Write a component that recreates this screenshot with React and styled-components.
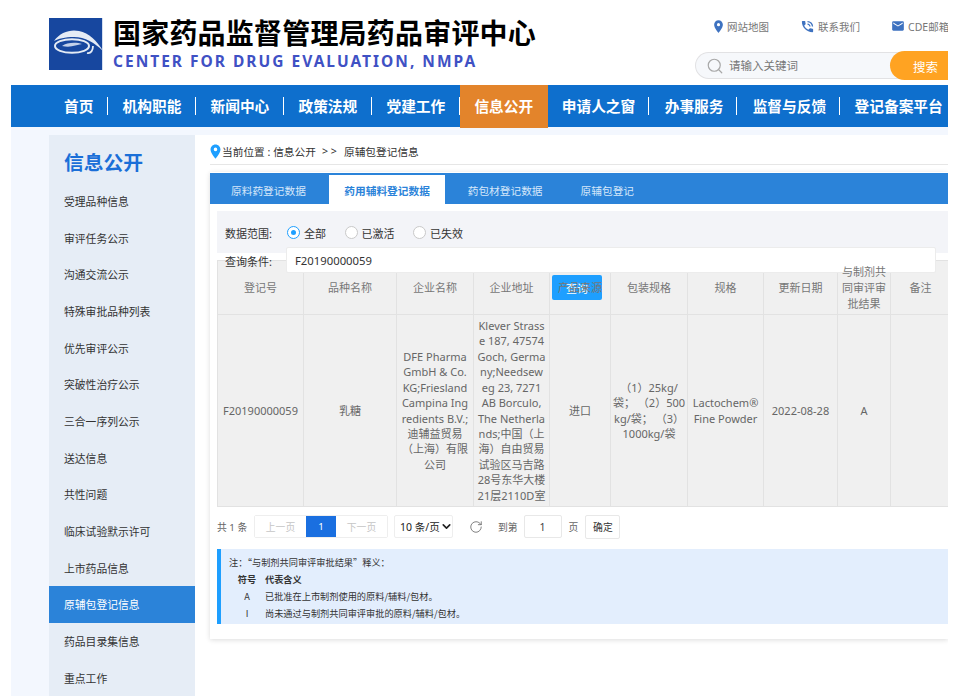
import React from "react";
import styled, { createGlobalStyle } from "styled-components";
import { MdLocationOn, MdPhoneInTalk, MdEmail } from "react-icons/md";
import { Search, RotateCw, ChevronDown } from "lucide-react";

const FONT = `"Noto Sans", "Noto Sans CJK SC", sans-serif`;

const Global = createGlobalStyle`
  html, body { margin: 0; padding: 0; background: #fff; height: 696px; overflow: hidden; }
  body { font-family: ${FONT}; }
  * { box-sizing: border-box; }
`;

const Page = styled.div`
  margin: 0 11px;
  width: 937px;
  height: 696px;
  overflow: hidden;
  display: flex;
  flex-direction: column;
`;

const Header = styled.header`
  height: 85px;
  flex: none;
  display: flex;
  justify-content: space-between;
  padding: 18px 0 0 38px;
`;
const Brand = styled.div`display: flex; gap: 10px; align-items: flex-start;`;
const BrandText = styled.div`display: flex; flex-direction: column;`;
const Title = styled.div`
  font-size: 28px;
  font-weight: 700;
  letter-spacing: 0.2px;
  line-height: 30px;
  color: #000;
`;
const Subtitle = styled.div`
  font-size: 15.5px;
  font-weight: 700;
  letter-spacing: 2px;
  line-height: 20px;
  color: #3f51c4;
  margin-top: 3px;
  white-space: nowrap;
`;
const Tools = styled.div`
  width: 253px;
  margin-top: -2px;
  display: flex;
  flex-direction: column;
  align-items: stretch;
`;
const Links = styled.div`
  display: flex;
  height: 20px;
  margin-left: 16px;
  align-items: center;
  white-space: nowrap;
`;
const TopLink = styled.span`
  display: flex;
  align-items: center;
  gap: ${(p) => p.$gap ?? 3}px;
  width: ${(p) => p.$w}px;
  flex: none;
  font-size: 10.5px;
  color: #777;
  svg { color: #3e72c0; flex: none; }
`;
const SearchBox = styled.div`
  margin-top: 16px;
  height: 27px;
  border: 1px solid #e2e2e4;
  border-radius: 14px 0 0 14px;
  border-right: none;
  background: #f6f8fb;
  display: flex;
  align-items: center;
  padding-left: 10px;
  gap: 5px;
  position: relative;
  svg { color: #a8a8a8; flex: none; }
`;
const SearchInput = styled.input`
  border: none;
  background: transparent;
  outline: none;
  font: 11.5px ${FONT};
  width: 120px;
  padding: 0;
  &::placeholder { color: #777; opacity: 1; }
`;
const SearchButton = styled.button`
  position: absolute;
  left: 194px;
  top: -2px;
  height: 29px;
  width: 70px;
  border: none;
  border-radius: 15px 0 0 15px;
  background: #ffa322;
  color: #fff;
  font: 12.5px ${FONT};
  padding: 2px 0 0 1px;
`;

const Nav = styled.nav`
  height: 42px;
  flex: none;
  background: #0e6fcd;
  display: flex;
  padding-left: 38px;
  position: relative;
  z-index: 2;
`;
const NavItem = styled.a`
  height: ${(p) => (p.$active ? 43 : 42)}px;
  padding: 0 ${(p) => p.$r ?? 14.6}px 2px ${(p) => p.$l ?? 14.6}px;
  display: flex;
  align-items: center;
  flex: none;
  position: relative;
  color: #fff;
  font-size: 14.7px;
  font-weight: 700;
  white-space: nowrap;
  background: ${(p) => (p.$active ? "#e3842b" : "transparent")};
  &::after {
    content: "";
    display: ${(p) => (p.$sep ? "block" : "none")};
    position: absolute;
    right: 0;
    top: 12px;
    height: 18px;
    width: 1px;
    background: #fff;
  }
`;

const Body = styled.div`
  flex: 1;
  min-height: 0;
  background: #f3f7fe;
  padding: 8px 0 0 38px;
  display: flex;
`;
const Sidebar = styled.aside`
  width: 146px;
  flex: none;
  background: #e6edf6;
`;
const SideTitle = styled.div`
  height: 47.5px;
  padding: 14px 0 0 15px;
  font-size: 19.8px;
  line-height: 28px;
  font-weight: 700;
  color: #1a6fd8;
`;
const SideItem = styled.div`
  height: 36.7px;
  padding-left: 15px;
  display: flex;
  align-items: center;
  font-size: 10.8px;
  color: ${(p) => (p.$active ? "#fff" : "#333")};
  background: ${(p) => (p.$active ? "#2b83d9" : "transparent")};
`;
const Main = styled.main`
  flex: 1;
  min-width: 0;
  background: #fff;
  padding-left: 15px;
`;
const Crumb = styled.div`
  height: 30px;
  border-bottom: 1px solid #e6e6e6;
  padding-top: 3px;
  display: flex;
  align-items: center;
  font-size: 10.7px;
  color: #333;
  svg { color: #1e9fff; margin-left: -3px; margin-right: -2px; flex: none; }
`;
const CrumbGap = styled.span`margin: 0 7px 0 6px;`;
const Card = styled.section`
  margin-top: 7px;
  height: 467px;
  background: #fff;
  box-shadow: 0 1px 5px rgba(0, 0, 0, 0.14);
  overflow: hidden;
`;
const TabBar = styled.div`
  height: 31px;
  margin-top: 1px;
  background: #2b83d9;
  display: flex;
  align-items: flex-end;
  padding-left: 2px;
`;
const Tab = styled.div`
  height: 29px;
  display: flex;
  align-items: center;
  font-size: 10.7px;
  padding: ${(p) => (p.$active ? "2px 15.5px 0" : "2px 19px 0")};
  margin: ${(p) => (p.$active ? "0 3.4px 0 4px" : "0")};
  background: ${(p) => (p.$active ? "#fff" : "transparent")};
  color: ${(p) => (p.$active ? "#2b83d9" : "#d6e7f9")};
  font-weight: ${(p) => (p.$active ? 700 : 400)};
  white-space: nowrap;
`;
const Content = styled.div`
  padding: 7px 0 0 7px;
  position: relative;
`;
const Filter = styled.div`
  height: 42px;
  background: #f3f4f8;
  display: flex;
  align-items: center;
  padding: 1px 0 0 8px;
  font-size: 11px;
  color: #333;
`;
const FieldLabel = styled.span`
  width: 62px;
  flex: none;
`;
const RadioOption = styled.label`
  display: flex;
  align-items: center;
  gap: 4px;
  margin-right: ${(p) => p.$mr}px;
`;
const RadioMark = styled.span`
  width: 13px;
  height: 13px;
  border-radius: 50%;
  background: #fff;
  border: 1px solid ${(p) => (p.$on ? "#1e9fff" : "#c9c9c9")};
  display: flex;
  align-items: center;
  justify-content: center;
  &::after {
    content: "";
    display: ${(p) => (p.$on ? "block" : "none")};
    width: 5px;
    height: 5px;
    border-radius: 50%;
    background: #1e9fff;
  }
`;
const QueryBar = styled.div`
  position: absolute;
  left: 15px;
  top: 43px;
  display: flex;
  align-items: center;
  font-size: 11px;
  color: #333;
  z-index: 2;
`;
const QueryLabel = styled.span`
  width: 61px;
  flex: none;
  padding-top: 1px;
`;
const QueryInput = styled.input`
  width: 650px;
  height: 26px;
  background: #fff;
  border: 1px solid #ececec;
  border-radius: 2px;
  padding: 0 8px;
  font: 11.3px ${FONT};
  color: #333;
  outline: none;
`;
const QueryButton = styled.button`
  position: absolute;
  left: 342px;
  top: 71px;
  width: 50px;
  height: 25px;
  background: #1e9fff;
  border: none;
  border-radius: 2px;
  color: #fff;
  font: 11px ${FONT};
  padding: 0;
  z-index: 1;
`;
const TableWrap = styled.div`
  margin-top: 7px;
`;
const DataTable = styled.table`
  table-layout: fixed;
  width: 733px;
  border-collapse: collapse;
  background: #f0f0f0;
  th, td {
    border: 1px solid #e2e2e2;
    font-size: 11px;
    font-weight: 400;
    color: #777;
    text-align: center;
    vertical-align: middle;
    white-space: nowrap;
    padding: 0;
    line-height: 15.4px;
  }
  th { height: 54px; line-height: 16px; }
  td { height: 192px; color: #666; }
`;
const HeadText = styled.span`position: relative; z-index: 3;`;
const CellLine = styled.span`display: block;`;
const Pager = styled.div`
  height: 23px;
  margin-top: 8px;
  display: flex;
  align-items: center;
  font-size: 9.8px;
  color: #666;
`;
const PagerCount = styled.span`width: 37px; flex: none;`;
const PageGroup = styled.div`
  display: flex;
  height: 23px;
  border: 1px solid #eee;
  border-radius: 2px;
  margin-right: 6px;
`;
const PageBtn = styled.span`
  width: ${(p) => p.$w}px;
  display: flex;
  align-items: center;
  justify-content: center;
  color: ${(p) => (p.$on ? "#fff" : "#c6c6c6")};
  background: ${(p) => (p.$on ? "#1a6fe0" : "#fff")};
  font-size: 9.8px;
`;
const PageSize = styled.div`
  width: 59px;
  height: 23px;
  border: 1px solid #eee;
  border-radius: 2px;
  display: flex;
  align-items: center;
  justify-content: space-between;
  padding: 0 2px 0 5px;
  font-size: 10.5px;
  color: #222;
  margin-right: 16px;
  white-space: nowrap;
  svg { color: #222; flex: none; }
`;
const RefreshIcon = styled.span`
  display: flex;
  width: 29px;
  flex: none;
  svg { color: #666; }
`;
const PagerText = styled.span`flex: none; margin-right: ${(p) => p.$mr}px;`;
const JumpInput = styled.span`
  width: 38px;
  height: 23px;
  border: 1px solid #e8e8e8;
  border-radius: 2px;
  display: flex;
  align-items: center;
  justify-content: center;
  margin-right: 7px;
  font-size: 10.5px;
  color: #444;
`;
const ConfirmBtn = styled.span`
  width: 35px;
  height: 24px;
  border: 1px solid #e8e8e8;
  border-radius: 2px;
  display: flex;
  align-items: center;
  justify-content: center;
  font-size: 9.8px;
  color: #333;
  margin-top: 1px;
`;
const Note = styled.div`
  margin-top: 11px;
  height: 75px;
  background: #e3eefd;
  border-left: 4px solid #1e9fff;
  padding: 5px 0 0 8px;
  font-family: "Noto Sans CJK SC", "Noto Sans", sans-serif;
  font-size: 9.2px;
  color: #333;
  line-height: 17px;
`;
const NoteRow = styled.div`display: flex; white-space: nowrap; height: 17px;`;
const NoteSym = styled.span`
  width: 36px;
  flex: none;
  text-align: center;
  font-weight: ${(p) => (p.$b ? 700 : 400)};
`;
const NoteMean = styled.span`font-weight: ${(p) => (p.$b ? 700 : 400)};`;

const Logo = () => (
  <svg width="54" height="52" viewBox="0 0 54 52">
    <rect width="53" height="52" fill="#17479f" />
    <rect x="53" width="1" height="52" fill="#d3def0" />
    <path d="M5 23 C11 14 22 11 30 13 C40 15 48 23 54 33 C46 25 36 19 25 19 C16 19 9 21 5 23 Z" fill="#e4ebf5" />
    <ellipse cx="23" cy="28" rx="17" ry="6.8" fill="none" stroke="#e4ebf5" strokeWidth="2" />
    <path d="M13 28 C18 24 28 24 33 26 C27 27 22 30 13 28 Z" fill="#c3d1ea" />
    <path d="M38 35 C42 36 44 32 44 28" stroke="#e4ebf5" strokeWidth="1.8" fill="none" />
  </svg>
);

const sideItems = ["受理品种信息", "审评任务公示", "沟通交流公示", "特殊审批品种列表", "优先审评公示", "突破性治疗公示", "三合一序列公示", "送达信息", "共性问题", "临床试验默示许可", "上市药品信息", "原辅包登记信息", "药品目录集信息", "重点工作"];
const cols = [86, 93, 77, 76, 61, 77, 76, 74, 53, 60];
const heads = [["登记号"], ["品种名称"], ["企业名称"], ["企业地址"], ["产品来源"], ["包装规格"], ["规格"], ["更新日期"], ["与制剂共", "同审评审", "批结果"], ["备注"]];
const cells = [
  ["F20190000059"],
  ["乳糖"],
  ["DFE Pharma", "GmbH & Co.", "KG;Friesland", "Campina Ing", "redients B.V.;", "迪辅益贸易", "（上海）有限", "公司"],
  ["Klever Strass", "e 187, 47574", "Goch, Germa", "ny;Needsew", "eg 23, 7271", "AB Borculo,", "The Netherla", "nds;中国（上", "海）自由贸易", "试验区马吉路", "28号东华大楼", "21层2110D室"],
  ["进口"],
  ["（1）25kg/", "袋； （2）500", "kg/袋； （3）", "1000kg/袋"],
  ["Lactochem®", "Fine Powder"],
  ["2022-08-28"],
  ["A"],
  [],
];

export default function App() {
  return (
    <Page>
      <Global />
      <Header>
        <Brand>
          <Logo />
          <BrandText>
            <Title>国家药品监督管理局药品审评中心</Title>
            <Subtitle>CENTER FOR DRUG EVALUATION, NMPA</Subtitle>
          </BrandText>
        </Brand>
        <Tools>
          <Links>
            <TopLink $w={89} $gap={1}><MdLocationOn size={15} />网站地图</TopLink>
            <TopLink $w={91}><MdPhoneInTalk size={15} />联系我们</TopLink>
            <TopLink $w={60}><MdEmail size={14} />CDE邮箱</TopLink>
          </Links>
          <SearchBox>
            <Search size={18} strokeWidth={1.6} />
            <SearchInput placeholder="请输入关键词" />
            <SearchButton>搜索</SearchButton>
          </SearchBox>
        </Tools>
      </Header>
      <Nav>
        <NavItem $sep $l={15}>首页</NavItem>
        <NavItem $sep>机构职能</NavItem>
        <NavItem $sep>新闻中心</NavItem>
        <NavItem $sep>政策法规</NavItem>
        <NavItem $sep>党建工作</NavItem>
        <NavItem $active>信息公开</NavItem>
        <NavItem $sep $l={14} $r={13.5}>申请人之窗</NavItem>
        <NavItem $sep $l={16} $r={13.2}>办事服务</NavItem>
        <NavItem $sep $l={16} $r={13.5}>监督与反馈</NavItem>
        <NavItem $l={15}>登记备案平台</NavItem>
      </Nav>
      <Body>
        <Sidebar>
          <SideTitle>信息公开</SideTitle>
          {sideItems.map((s) => <SideItem key={s} $active={s === "原辅包登记信息"}>{s}</SideItem>)}
        </Sidebar>
        <Main>
          <Crumb>
            <MdLocationOn size={17} />
            当前位置 : 信息公开<CrumbGap>&gt; &gt;</CrumbGap>原辅包登记信息
          </Crumb>
          <Card>
            <TabBar>
              <Tab>原料药登记数据</Tab>
              <Tab $active>药用辅料登记数据</Tab>
              <Tab>药包材登记数据</Tab>
              <Tab>原辅包登记</Tab>
            </TabBar>
            <Content>
              <Filter>
                <FieldLabel>数据范围:</FieldLabel>
                <RadioOption $mr={18.5}><RadioMark $on />全部</RadioOption>
                <RadioOption $mr={18.5}><RadioMark />已激活</RadioOption>
                <RadioOption $mr={0}><RadioMark />已失效</RadioOption>
              </Filter>
              <QueryBar>
                <QueryLabel>查询条件:</QueryLabel>
                <QueryInput defaultValue="F20190000059" />
              </QueryBar>
              <TableWrap>
                <DataTable>
                  <colgroup>{cols.map((w, i) => <col key={i} style={{ width: w }} />)}</colgroup>
                  <thead>
                    <tr>
                      {heads.map((h) => (
                        <th key={h[0]}>{h.map((l) => <CellLine key={l}><HeadText>{l}</HeadText></CellLine>)}</th>
                      ))}
                    </tr>
                  </thead>
                  <tbody>
                    <tr>
                      {cells.map((c, i) => (
                        <td key={i}>{c.map((l) => <CellLine key={l}>{l}</CellLine>)}</td>
                      ))}
                    </tr>
                  </tbody>
                </DataTable>
              </TableWrap>
              <QueryButton>查询</QueryButton>
              <Pager>
                <PagerCount>共 1 条</PagerCount>
                <PageGroup>
                  <PageBtn $w={51}>上一页</PageBtn>
                  <PageBtn $w={30} $on>1</PageBtn>
                  <PageBtn $w={51}>下一页</PageBtn>
                </PageGroup>
                <PageSize>10 条/页<ChevronDown size={13} strokeWidth={3} /></PageSize>
                <RefreshIcon><RotateCw size={14} strokeWidth={1.4} /></RefreshIcon>
                <PagerText $mr={6}>到第</PagerText>
                <JumpInput>1</JumpInput>
                <PagerText $mr={7}>页</PagerText>
                <ConfirmBtn>确定</ConfirmBtn>
              </Pager>
              <Note>
                <NoteRow>注：“与制剂共同审评审批结果”释义：</NoteRow>
                <NoteRow><NoteSym $b>符号</NoteSym><NoteMean $b>代表含义</NoteMean></NoteRow>
                <NoteRow><NoteSym>A</NoteSym><NoteMean>已批准在上市制剂使用的原料/辅料/包材。</NoteMean></NoteRow>
                <NoteRow><NoteSym>I</NoteSym><NoteMean>尚未通过与制剂共同审评审批的原料/辅料/包材。</NoteMean></NoteRow>
              </Note>
            </Content>
          </Card>
        </Main>
      </Body>
    </Page>
  );
}
